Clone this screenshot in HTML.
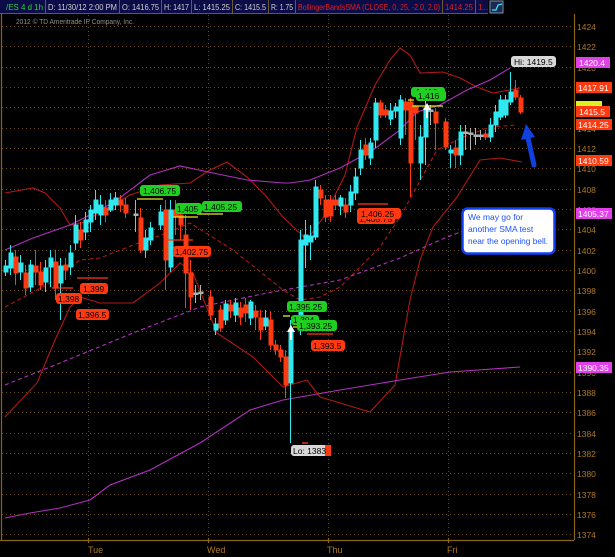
<!DOCTYPE html>
<html><head><meta charset="utf-8"><style>
html,body{margin:0;padding:0;background:#000;width:615px;height:557px;overflow:hidden}
svg{display:block;font-family:"Liberation Sans",sans-serif}
</style></head><body>
<svg width="615" height="557" viewBox="0 0 615 557" xmlns="http://www.w3.org/2000/svg">
<rect width="615" height="557" fill="#000"/>
<!-- top bar -->
<rect x="0" y="0" width="488" height="13" fill="#0c0c48"/>
<g stroke="#6a5a30" stroke-width="1">
<line x1="45.5" y1="0" x2="45.5" y2="13"/><line x1="119.5" y1="0" x2="119.5" y2="13"/><line x1="161.5" y1="0" x2="161.5" y2="13"/><line x1="191.5" y1="0" x2="191.5" y2="13"/><line x1="232.5" y1="0" x2="232.5" y2="13"/><line x1="268.5" y1="0" x2="268.5" y2="13"/><line x1="295.5" y1="0" x2="295.5" y2="13"/><line x1="442.5" y1="0" x2="442.5" y2="13"/><line x1="475.5" y1="0" x2="475.5" y2="13"/>
<line x1="0" y1="13.5" x2="488" y2="13.5"/>
</g>
<g font-size="8.5" fill="#d0d0d0" lengthAdjust="spacingAndGlyphs">
<text x="6" y="10" fill="#2ad040" textLength="37" lengthAdjust="spacingAndGlyphs">/ES 4 d 1h</text>
<text x="48" y="10" textLength="69" lengthAdjust="spacingAndGlyphs">D: 11/30/12 2:00 PM</text>
<text x="122" y="10" textLength="37" lengthAdjust="spacingAndGlyphs">O: 1416.75</text>
<text x="164" y="10" textLength="25" lengthAdjust="spacingAndGlyphs">H: 1417</text>
<text x="194" y="10" textLength="36" lengthAdjust="spacingAndGlyphs">L: 1415.25</text>
<text x="235" y="10" textLength="31" lengthAdjust="spacingAndGlyphs">C: 1415.5</text>
<text x="271" y="10" textLength="22" lengthAdjust="spacingAndGlyphs">R: 1.75</text>
<text x="298" y="10" fill="#e02020" textLength="142" lengthAdjust="spacingAndGlyphs">BollingerBandsSMA (CLOSE, 0, 25, -2.0, 2.0)</text>
<text x="445" y="10" fill="#e02020" textLength="28" lengthAdjust="spacingAndGlyphs">1414.25</text>
<text x="478" y="10" fill="#e02020">1…</text>
</g>
<rect x="490" y="1" width="13" height="12" fill="#1a2a50" stroke="#8090b0"/>
<path d="M492 10 L496 10 L498 5 L502 4" stroke="#40e0ff" fill="none" stroke-width="1.3"/>
<text x="16" y="24" font-size="7.5" fill="#909090" textLength="118" lengthAdjust="spacingAndGlyphs">2012 © TD Ameritrade IP Company, Inc.</text>
<!-- grid -->
<g stroke="#6a4a10" stroke-width="1" stroke-dasharray="1,3">
<line x1="2" y1="26.5" x2="573" y2="26.5"/><line x1="2" y1="46.5" x2="573" y2="46.5"/><line x1="2" y1="67.5" x2="573" y2="67.5"/><line x1="2" y1="87.5" x2="573" y2="87.5"/><line x1="2" y1="107.5" x2="573" y2="107.5"/><line x1="2" y1="128.5" x2="573" y2="128.5"/><line x1="2" y1="148.5" x2="573" y2="148.5"/><line x1="2" y1="168.5" x2="573" y2="168.5"/><line x1="2" y1="189.5" x2="573" y2="189.5"/><line x1="2" y1="209.5" x2="573" y2="209.5"/><line x1="2" y1="229.5" x2="573" y2="229.5"/><line x1="2" y1="250.5" x2="573" y2="250.5"/><line x1="2" y1="270.5" x2="573" y2="270.5"/><line x1="2" y1="290.5" x2="573" y2="290.5"/><line x1="2" y1="311.5" x2="573" y2="311.5"/><line x1="2" y1="331.5" x2="573" y2="331.5"/><line x1="2" y1="351.5" x2="573" y2="351.5"/><line x1="2" y1="372.5" x2="573" y2="372.5"/><line x1="2" y1="392.5" x2="573" y2="392.5"/><line x1="2" y1="412.5" x2="573" y2="412.5"/><line x1="2" y1="433.5" x2="573" y2="433.5"/><line x1="2" y1="453.5" x2="573" y2="453.5"/><line x1="2" y1="473.5" x2="573" y2="473.5"/><line x1="2" y1="494.5" x2="573" y2="494.5"/><line x1="2" y1="514.5" x2="573" y2="514.5"/><line x1="2" y1="534.5" x2="573" y2="534.5"/>
<line x1="88.5" y1="15" x2="88.5" y2="540"/><line x1="208.5" y1="15" x2="208.5" y2="540"/><line x1="328.5" y1="15" x2="328.5" y2="540"/><line x1="448.5" y1="15" x2="448.5" y2="540"/>
</g>
<g stroke="#8a6418" stroke-width="1.2">
<line x1="1.5" y1="14" x2="1.5" y2="540"/><line x1="0" y1="540.5" x2="574" y2="540.5"/><line x1="574.5" y1="14" x2="574.5" y2="540"/>
<line x1="88.5" y1="538" x2="88.5" y2="543"/><line x1="208.5" y1="538" x2="208.5" y2="543"/><line x1="328.5" y1="538" x2="328.5" y2="543"/><line x1="448.5" y1="538" x2="448.5" y2="543"/>
</g>
<g font-size="9" fill="#b07820">
<text x="88" y="553">Tue</text><text x="207" y="553">Wed</text><text x="327" y="553">Thu</text><text x="447" y="553">Fri</text>
</g>
<g font-size="8.5" fill="#b07820">
<text x="577" y="30">1424</text><text x="577" y="50">1422</text><text x="577" y="71">1420</text><text x="577" y="91">1418</text><text x="577" y="111">1416</text><text x="577" y="132">1414</text><text x="577" y="152">1412</text><text x="577" y="172">1410</text><text x="577" y="193">1408</text><text x="577" y="213">1406</text><text x="577" y="233">1404</text><text x="577" y="254">1402</text><text x="577" y="274">1400</text><text x="577" y="294">1398</text><text x="577" y="315">1396</text><text x="577" y="335">1394</text><text x="577" y="355">1392</text><text x="577" y="376">1390</text><text x="577" y="396">1388</text><text x="577" y="416">1386</text><text x="577" y="437">1384</text><text x="577" y="457">1382</text><text x="577" y="477">1380</text><text x="577" y="498">1378</text><text x="577" y="518">1376</text><text x="577" y="538">1374</text>
</g>
<!-- indicator lines -->
<g fill="none" stroke-width="1.1">
<polyline stroke="#b01818" points="5,193 33,188 45,193 60,208 70,225 85,222 100,212 130,195 160,185 190,183 210,170 227,162 247,177 265,195 283,217 307,240 325,215 345,175 357,127 375,85 390,60 400,48 410,55 420,73 443,72 460,78 477,87 493,93 520,88"/>
<polyline stroke="#b01818" points="5,417 37,383 55,340 70,307 80,297 100,303 133,303 160,283 180,263 193,273 217,333 253,357 283,387 297,383 307,380 320,397 340,403 370,412 395,385 410,300 420,260 433,227 457,197 480,160 500,158 522,162"/>
<polyline stroke="#b01818" stroke-dasharray="4,3" points="5,307 50,283 80,260 100,258 133,245 167,233 190,223 233,250 283,290 300,300 320,297 340,287 380,247 400,217 437,150 463,137 490,127 517,125"/>
<polyline stroke="#b030c0" points="5,250 33,238 70,225 100,210 117,200 150,175 180,166 213,173 247,180 283,183 290,183 310,180 340,168 373,150 400,130 417,112 440,105 467,90 490,80 510,68"/>
<polyline stroke="#b030c0" stroke-dasharray="4,3" points="5,385 60,363 133,333 200,307 267,293 340,280 400,258 440,240 470,228"/>
<polyline stroke="#b030c0" points="5,518 30,513 60,508 90,500 110,485 150,470 200,443 250,410 283,400 340,390 400,380 450,372 520,367"/>
</g>
<!-- candles -->
<g stroke-width="1">
<g stroke="#30e8f0" fill="#30e8f0">
<line x1="5.5" y1="260" x2="5.5" y2="276"/><rect x="4" y="266" width="4" height="6"/>
<line x1="10.5" y1="245" x2="10.5" y2="275"/><rect x="9" y="253" width="4" height="15"/>
<line x1="20.5" y1="255" x2="20.5" y2="280"/><rect x="19" y="263" width="4" height="9"/>
<line x1="30.5" y1="260" x2="30.5" y2="292"/><rect x="29" y="265" width="4" height="22"/>
<line x1="45.5" y1="260" x2="45.5" y2="292"/><rect x="44" y="268" width="4" height="14"/>
<line x1="50.5" y1="250" x2="50.5" y2="287"/><rect x="49" y="258" width="4" height="9"/>
<line x1="60.5" y1="258" x2="60.5" y2="320"/><rect x="59" y="266" width="4" height="17"/>
<line x1="70.5" y1="245" x2="70.5" y2="275"/><rect x="69" y="253" width="4" height="14"/>
<line x1="75.5" y1="215" x2="75.5" y2="250"/><rect x="74" y="225" width="4" height="18"/>
<line x1="85.5" y1="212" x2="85.5" y2="240"/><rect x="84" y="220" width="4" height="12"/>
<line x1="90.5" y1="205" x2="90.5" y2="232"/><rect x="89" y="210" width="4" height="12"/>
<line x1="95.5" y1="190" x2="95.5" y2="220"/><rect x="94" y="200" width="4" height="13"/>
<line x1="100.5" y1="195" x2="100.5" y2="225"/><rect x="99" y="205" width="4" height="10"/>
<line x1="110.5" y1="193" x2="110.5" y2="212"/><rect x="109" y="200" width="4" height="10"/>
<line x1="115.5" y1="192" x2="115.5" y2="210"/><rect x="114" y="198" width="4" height="7"/>
<line x1="145.5" y1="230" x2="145.5" y2="258"/><rect x="144" y="238" width="4" height="12"/>
<line x1="150.5" y1="222" x2="150.5" y2="245"/><rect x="149" y="228" width="4" height="12"/>
<line x1="160.5" y1="205" x2="160.5" y2="230"/><rect x="159" y="212" width="4" height="13"/>
<line x1="170.5" y1="200" x2="170.5" y2="272"/><rect x="169" y="210" width="4" height="57"/>
<line x1="215.5" y1="318" x2="215.5" y2="335"/><rect x="214" y="324" width="4" height="6"/>
<line x1="225.5" y1="300" x2="225.5" y2="325"/><rect x="224" y="304" width="4" height="16"/>
<line x1="235.5" y1="298" x2="235.5" y2="322"/><rect x="234" y="303" width="4" height="12"/>
<line x1="250.5" y1="300" x2="250.5" y2="325"/><rect x="249" y="302" width="4" height="16"/>
<line x1="265.5" y1="310" x2="265.5" y2="330"/><rect x="264" y="318" width="4" height="8"/>
<line x1="290.5" y1="320" x2="290.5" y2="443"/><rect x="289" y="330" width="4" height="53"/>
<line x1="300.5" y1="230" x2="300.5" y2="335"/><rect x="299" y="240" width="4" height="90"/>
<line x1="305.5" y1="220" x2="305.5" y2="268"/><rect x="304" y="235" width="4" height="10"/>
<line x1="310.5" y1="225" x2="310.5" y2="260"/><rect x="309" y="236" width="4" height="6"/>
<line x1="315.5" y1="180" x2="315.5" y2="240"/><rect x="314" y="187" width="4" height="50"/>
<line x1="340.5" y1="195" x2="340.5" y2="215"/><rect x="339" y="198" width="4" height="8"/>
<line x1="350.5" y1="185" x2="350.5" y2="212"/><rect x="349" y="192" width="4" height="13"/>
<line x1="355.5" y1="168" x2="355.5" y2="200"/><rect x="354" y="177" width="4" height="16"/>
<line x1="360.5" y1="140" x2="360.5" y2="175"/><rect x="359" y="150" width="4" height="18"/>
<line x1="370.5" y1="138" x2="370.5" y2="165"/><rect x="369" y="143" width="4" height="15"/>
<line x1="375.5" y1="98" x2="375.5" y2="148"/><rect x="374" y="103" width="4" height="37"/>
<line x1="390.5" y1="103" x2="390.5" y2="125"/><rect x="389" y="111" width="4" height="8"/>
<line x1="395.5" y1="103" x2="395.5" y2="118"/><rect x="394" y="107" width="4" height="4"/>
<line x1="400.5" y1="95" x2="400.5" y2="145"/><rect x="399" y="100" width="4" height="38"/>
<line x1="420.5" y1="125" x2="420.5" y2="180"/><rect x="419" y="137" width="4" height="26"/>
<line x1="425.5" y1="100" x2="425.5" y2="165"/><rect x="424" y="108" width="4" height="29"/>
<line x1="450.5" y1="145" x2="450.5" y2="168"/><rect x="449" y="150" width="4" height="3"/>
<line x1="460.5" y1="125" x2="460.5" y2="165"/><rect x="459" y="132" width="4" height="23"/>
<line x1="490.5" y1="118" x2="490.5" y2="142"/><rect x="489" y="125" width="4" height="12"/>
<line x1="495.5" y1="105" x2="495.5" y2="132"/><rect x="494" y="112" width="4" height="13"/>
<line x1="500.5" y1="95" x2="500.5" y2="120"/><rect x="499" y="100" width="4" height="17"/>
<line x1="505.5" y1="95" x2="505.5" y2="118"/><rect x="504" y="100" width="4" height="15"/>
<line x1="510.5" y1="72" x2="510.5" y2="105"/><rect x="509" y="92" width="4" height="10"/>
</g>
<g stroke="#ff3a10" fill="#ff3a10">
<line x1="15.5" y1="250" x2="15.5" y2="285"/><rect x="14" y="257" width="4" height="16"/>
<line x1="25.5" y1="265" x2="25.5" y2="295"/><rect x="24" y="273" width="4" height="15"/>
<line x1="35.5" y1="250" x2="35.5" y2="285"/><rect x="34" y="266" width="4" height="6"/>
<line x1="40.5" y1="262" x2="40.5" y2="290"/><rect x="39" y="272" width="4" height="13"/>
<line x1="55.5" y1="250" x2="55.5" y2="300"/><rect x="54" y="262" width="4" height="25"/>
<line x1="65.5" y1="258" x2="65.5" y2="280"/><rect x="64" y="265" width="4" height="5"/>
<line x1="80.5" y1="222" x2="80.5" y2="248"/><rect x="79" y="230" width="4" height="10"/>
<line x1="105.5" y1="200" x2="105.5" y2="222"/><rect x="104" y="208" width="4" height="7"/>
<line x1="120.5" y1="195" x2="120.5" y2="212"/><rect x="119" y="200" width="4" height="5"/>
<line x1="125.5" y1="198" x2="125.5" y2="218"/><rect x="124" y="205" width="4" height="8"/>
<line x1="140.5" y1="208" x2="140.5" y2="253"/><rect x="139" y="218" width="4" height="32"/>
<line x1="165.5" y1="200" x2="165.5" y2="290"/><rect x="164" y="210" width="4" height="50"/>
<line x1="175.5" y1="200" x2="175.5" y2="235"/><rect x="174" y="210" width="4" height="6"/>
<line x1="180.5" y1="205" x2="180.5" y2="240"/><rect x="179" y="215" width="4" height="10"/>
<line x1="185.5" y1="215" x2="185.5" y2="308"/><rect x="184" y="235" width="4" height="38"/>
<line x1="190.5" y1="260" x2="190.5" y2="310"/><rect x="189" y="273" width="4" height="24"/>
<line x1="210.5" y1="290" x2="210.5" y2="320"/><rect x="209" y="297" width="4" height="18"/>
<line x1="220.5" y1="305" x2="220.5" y2="332"/><rect x="219" y="310" width="4" height="18"/>
<line x1="230.5" y1="300" x2="230.5" y2="318"/><rect x="229" y="305" width="4" height="6"/>
<line x1="240.5" y1="302" x2="240.5" y2="325"/><rect x="239" y="308" width="4" height="9"/>
<line x1="245.5" y1="298" x2="245.5" y2="322"/><rect x="244" y="305" width="4" height="8"/>
<line x1="255.5" y1="305" x2="255.5" y2="330"/><rect x="254" y="311" width="4" height="6"/>
<line x1="260.5" y1="310" x2="260.5" y2="340"/><rect x="259" y="318" width="4" height="12"/>
<line x1="270.5" y1="312" x2="270.5" y2="350"/><rect x="269" y="320" width="4" height="25"/>
<line x1="275.5" y1="340" x2="275.5" y2="355"/><rect x="274" y="345" width="4" height="5"/>
<line x1="280.5" y1="345" x2="280.5" y2="362"/><rect x="279" y="350" width="4" height="7"/>
<line x1="285.5" y1="350" x2="285.5" y2="398"/><rect x="284" y="357" width="4" height="28"/>
<line x1="320.5" y1="185" x2="320.5" y2="205"/><rect x="319" y="190" width="4" height="8"/>
<line x1="325.5" y1="195" x2="325.5" y2="222"/><rect x="324" y="200" width="4" height="17"/>
<line x1="330.5" y1="195" x2="330.5" y2="222"/><rect x="329" y="200" width="4" height="16"/>
<line x1="335.5" y1="195" x2="335.5" y2="210"/><rect x="334" y="200" width="4" height="5"/>
<line x1="345.5" y1="198" x2="345.5" y2="218"/><rect x="344" y="205" width="4" height="7"/>
<line x1="365.5" y1="138" x2="365.5" y2="160"/><rect x="364" y="145" width="4" height="10"/>
<line x1="380.5" y1="100" x2="380.5" y2="118"/><rect x="379" y="103" width="4" height="12"/>
<line x1="385.5" y1="105" x2="385.5" y2="118"/><rect x="384" y="110" width="4" height="5"/>
<line x1="405.5" y1="98" x2="405.5" y2="135"/><rect x="404" y="102" width="4" height="8"/>
<line x1="410.5" y1="98" x2="410.5" y2="197"/><rect x="409" y="102" width="4" height="61"/>
<line x1="415.5" y1="105" x2="415.5" y2="140"/><rect x="414" y="107" width="4" height="6"/>
<line x1="435.5" y1="108" x2="435.5" y2="150"/><rect x="434" y="112" width="4" height="11"/>
<line x1="445.5" y1="118" x2="445.5" y2="150"/><rect x="444" y="122" width="4" height="25"/>
<line x1="455.5" y1="140" x2="455.5" y2="168"/><rect x="454" y="148" width="4" height="7"/>
<line x1="485.5" y1="130" x2="485.5" y2="140"/><rect x="484" y="134" width="4" height="3"/>
<line x1="515.5" y1="80" x2="515.5" y2="100"/><rect x="514" y="90" width="4" height="7"/>
<line x1="520.5" y1="95" x2="520.5" y2="114"/><rect x="519" y="98" width="4" height="14"/>
</g>
<g stroke="#b0b0b0" fill="#b0b0b0">
<line x1="135.5" y1="200" x2="135.5" y2="232"/><rect x="134" y="214" width="4" height="1.5"/>
<line x1="195.5" y1="285" x2="195.5" y2="303"/><rect x="194" y="293" width="4" height="1.5"/>
<line x1="200.5" y1="285" x2="200.5" y2="300"/><rect x="199" y="292" width="4" height="1.5"/>
<line x1="430.5" y1="105" x2="430.5" y2="125"/><rect x="429" y="110" width="4" height="1.5"/>
<line x1="465.5" y1="125" x2="465.5" y2="150"/><rect x="464" y="132" width="4" height="1.5"/>
<line x1="470.5" y1="128" x2="470.5" y2="150"/><rect x="469" y="133" width="4" height="1.5"/>
<line x1="475.5" y1="128" x2="475.5" y2="145"/><rect x="474" y="135" width="4" height="1.5"/>
<line x1="480.5" y1="130" x2="480.5" y2="140"/><rect x="479" y="135" width="4" height="1.5"/>
</g>
</g>
<!-- yellow / red level lines -->
<g stroke-width="1.3">
<line x1="137" y1="199" x2="163" y2="199" stroke="#e0f020"/>
<line x1="173" y1="217" x2="198" y2="217" stroke="#e0f020"/>
<line x1="197" y1="214" x2="223" y2="214" stroke="#e0f020"/>
<line x1="283" y1="316" x2="290" y2="316" stroke="#e0f020"/>
<line x1="293" y1="327" x2="318" y2="327" stroke="#e0f020"/>
<line x1="412" y1="106" x2="443" y2="106" stroke="#e0f020"/>
<line x1="408" y1="100" x2="414" y2="100" stroke="#e0f020"/>
<line x1="77" y1="278" x2="108" y2="278" stroke="#ff3a10"/>
<line x1="52" y1="288" x2="73" y2="288" stroke="#ff3a10"/>
<line x1="167" y1="240" x2="193" y2="240" stroke="#ff3a10"/>
<line x1="307" y1="334" x2="333" y2="334" stroke="#ff3a10"/>
<line x1="358" y1="204" x2="388" y2="204" stroke="#ff3a10"/>
<line x1="302" y1="443" x2="308" y2="443" stroke="#ff3a10"/>
</g>
<!-- white arrows -->
<path d="M290 340 L290 332 L287 332 L291 325 L295 332 L292 332 L292 340Z" fill="#fff"/>
<path d="M426 118 L426 110 L423 110 L427 103 L431 110 L428 110 L428 118Z" fill="#fff"/>
<!-- labels -->
<g font-size="8.5">
<rect x="140" y="185" width="40" height="11" rx="3" fill="#20d020"/><text x="143" y="194" fill="#000">1,406.75</text>
<rect x="175" y="203" width="27" height="11" rx="3" fill="#20d020"/><text x="177" y="212" fill="#000">1,405</text>
<rect x="202" y="201" width="40" height="11" rx="3" fill="#20d020"/><text x="204" y="210" fill="#000">1,405.25</text>
<rect x="173" y="246" width="38" height="11" rx="3" fill="#ff3a10"/><text x="175" y="255" fill="#000">1,402.75</text>
<rect x="80" y="283" width="28" height="11" rx="3" fill="#ff3a10"/><text x="83" y="292" fill="#000">1,399</text>
<rect x="56" y="293" width="26" height="11" rx="3" fill="#ff3a10"/><text x="58" y="302" fill="#000">1,398</text>
<rect x="76" y="309" width="33" height="11" rx="3" fill="#ff3a10"/><text x="78" y="318" fill="#000">1,396.5</text>
<rect x="287" y="301" width="40" height="11" rx="3" fill="#20d020"/><text x="289" y="310" fill="#000">1,395.25</text>
<rect x="291" y="315" width="28" height="10" rx="3" fill="#20d020"/><text x="293" y="323" fill="#000">1,394</text>
<rect x="297" y="320" width="40" height="11" rx="3" fill="#20d020"/><text x="299" y="329" fill="#000">1,393.25</text>
<rect x="311" y="340" width="34" height="11" rx="3" fill="#ff3a10"/><text x="313" y="349" fill="#000">1,393.5</text>
<rect x="357" y="213" width="38" height="11" rx="3" fill="#ff3a10"/><text x="359" y="222" fill="#000">1,405.75</text>
<rect x="357" y="208" width="44" height="11" rx="3" fill="#ff3a10"/><text x="361" y="217" fill="#000">1,406.25</text>
<rect x="411" y="87" width="34" height="10" rx="3" fill="#20d020"/><text x="416" y="95" fill="#000">1,416</text>
<rect x="416" y="90" width="30" height="11" rx="3" fill="#20d020"/><text x="418" y="99" fill="#000">1,416</text>
<rect x="291" y="445" width="37" height="11" rx="3" fill="#d8d8d8"/><rect x="325" y="445" width="6" height="11" fill="#ff3a10"/><text x="293" y="454" fill="#000">Lo: 1383</text>
<rect x="511" y="56" width="45" height="11" rx="3" fill="#d8d8d8"/><text x="514" y="65" fill="#000">Hi: 1419.5</text>
</g>
<!-- right price tags -->
<g font-size="8.5">
<rect x="576" y="57" width="34" height="11" fill="#e040e8"/><text x="579" y="66" fill="#fff">1420.4</text>
<rect x="576" y="82" width="36" height="11" fill="#ff3a10"/><text x="578" y="91" fill="#fff">1417.91</text>
<rect x="576" y="101" width="26" height="6" fill="#e0f020"/>
<rect x="576" y="106" width="34" height="11" fill="#ff3a10"/><text x="579" y="115" fill="#fff">1415.5</text>
<rect x="576" y="119" width="36" height="11" fill="#ff3a10"/><text x="578" y="128" fill="#fff">1414.25</text>
<rect x="576" y="155" width="36" height="11" fill="#ff3a10"/><text x="578" y="164" fill="#fff">1410.59</text>
<rect x="576" y="208" width="36" height="11" fill="#e040e8"/><text x="578" y="217" fill="#fff">1405.37</text>
<rect x="576" y="362" width="36" height="11" fill="#e040e8"/><text x="578" y="371" fill="#fff">1390.35</text>
</g>
<!-- note box -->
<rect x="462.5" y="208.5" width="92" height="45" rx="5" fill="#fff" stroke="#1040f0" stroke-width="2.5"/>
<g font-size="8.5" fill="#2050ff">
<text x="468" y="220">We may go for</text>
<text x="468" y="232">another SMA test</text>
<text x="468" y="244" textLength="80" lengthAdjust="spacingAndGlyphs">near the opening bell.</text>
</g>
<!-- blue arrow -->
<path d="M534 165 L528 138" stroke="#1040e0" stroke-width="5" stroke-linecap="round" fill="none"/>
<path d="M521 140 L526 124 L535 137Z" fill="#1040e0"/>
</svg>
</body></html>
